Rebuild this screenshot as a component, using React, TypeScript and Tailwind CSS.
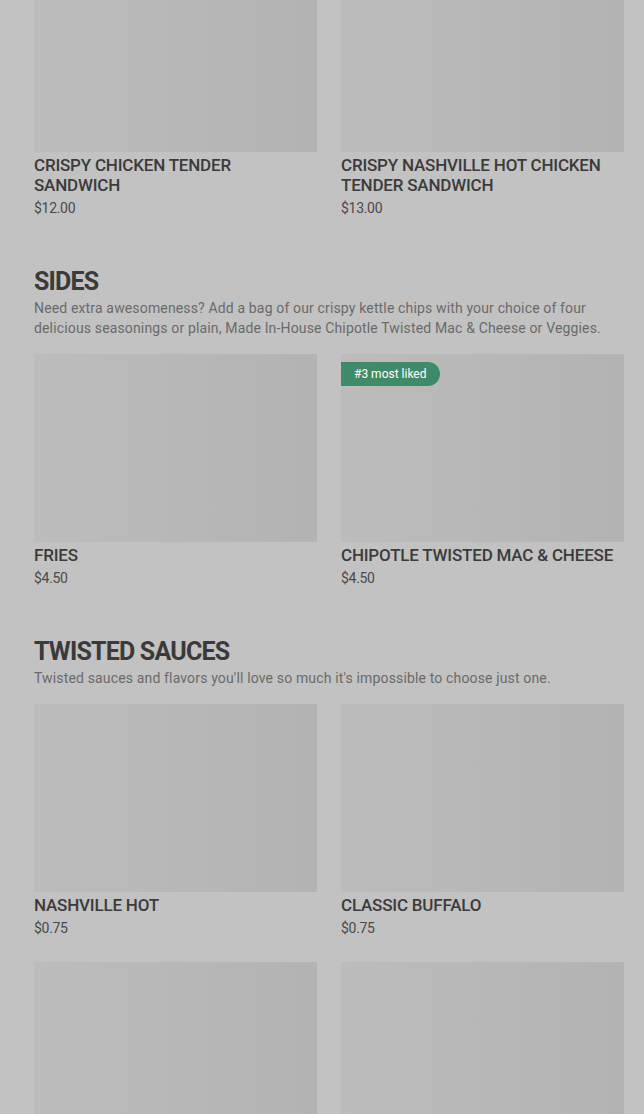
const sections = [
  {
    title: "",
    description: "",
    items: [
      { name: "CRISPY CHICKEN TENDER SANDWICH", price: "$12.00" },
      { name: "CRISPY NASHVILLE HOT CHICKEN TENDER SANDWICH", price: "$13.00" },
    ],
  },
  {
    title: "SIDES",
    description:
      "Need extra awesomeness? Add a bag of our crispy kettle chips with your choice of four delicious seasonings or plain, Made In-House Chipotle Twisted Mac & Cheese or Veggies.",
    items: [
      { name: "FRIES", price: "$4.50" },
      { name: "CHIPOTLE TWISTED MAC & CHEESE", price: "$4.50", badge: "#3 most liked" },
    ],
  },
  {
    title: "TWISTED SAUCES",
    description: "Twisted sauces and flavors you'll love so much it's impossible to choose just one.",
    items: [
      { name: "NASHVILLE HOT", price: "$0.75" },
      { name: "CLASSIC BUFFALO", price: "$0.75" },
      { name: "", price: "" },
      { name: "", price: "" },
    ],
  },
];

type Item = { name: string; price: string; badge?: string };

const MenuCard = ({ item }: { item: Item }) => (
  <div className="flex flex-col">
    <div className="relative h-[188px] bg-gradient-to-r from-[#bcbcbc] to-[#b3b3b3]">
      {item.badge && (
        <span className="absolute left-0 top-2 h-6 px-[13px] flex items-center rounded-r-full bg-[#3f8a68] text-white text-[12px]">
          {item.badge}
        </span>
      )}
    </div>
    {item.name && (
      <>
        <div className="mt-[3px] text-[17px] leading-5 font-medium text-[#3b3b3b] tracking-[-0.2px]">{item.name}</div>
        <div className="mt-[3px] text-[14px] leading-5 text-[#4a4a4a] tracking-[-0.3px]">{item.price}</div>
      </>
    )}
  </div>
);

export default function App() {
  return (
    <div
      className="h-[1114px] overflow-hidden bg-[#c2c2c2]"
      style={{ fontFamily: "Roboto, 'Liberation Sans', sans-serif" }}
    >
      <div className="-mt-[36px] pl-[34px] pr-[20px] flex flex-col gap-12">
        {sections.map((section, i) => (
          <section key={i} className="flex flex-col">
            {section.title && (
              <>
                <h2 className="text-[25px] leading-8 font-bold text-[#3a3a3a] tracking-[-0.8px]">{section.title}</h2>
                <p className="text-[14px] leading-5 text-[#6a6a6a] tracking-[0.15px] mb-4">{section.description}</p>
              </>
            )}
            <div className="grid grid-cols-2 gap-x-6 gap-y-6">
              {section.items.map((item, j) => (
                <MenuCard key={j} item={item} />
              ))}
            </div>
          </section>
        ))}
      </div>
    </div>
  );
}
